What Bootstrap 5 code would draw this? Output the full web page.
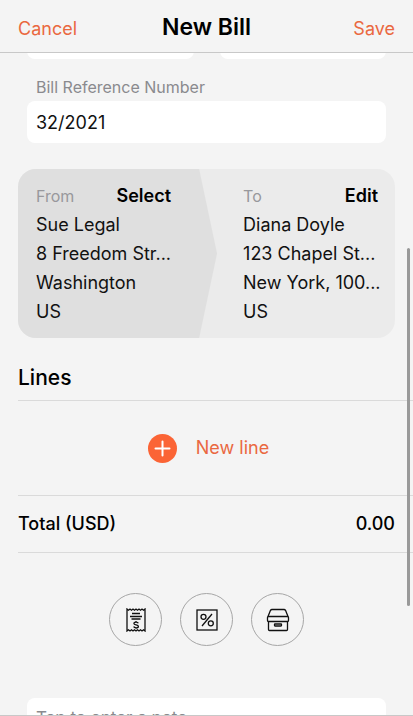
<!DOCTYPE html>
<html lang="en">
<head>
<meta charset="utf-8">
<meta name="viewport" content="width=device-width, initial-scale=1">
<title>New Bill</title>
<link rel="stylesheet" href="https://cdn.jsdelivr.net/npm/bootstrap@5.3.0/dist/css/bootstrap.min.css">
<style>
  :root { --accent: #ea6840; --page: #f4f4f4; --muted: #8a8a8e; }
  body { font-family: Inter, "Liberation Sans", sans-serif; font-size: 18px; line-height: 28px; color: #111; background: var(--page); }
  .app-bar { height: 53px; padding: 2px 18px 0; border-bottom: 1px solid #c8c8c8; }
  .app-bar h1 { font-size: 23px; line-height: 28px; font-weight: 600; color: #000; }
  .plain-btn { padding: 0; border: 0; background: none; color: inherit; line-height: 28px; }
  .accent-text { color: var(--accent); }
  .bar-btn { padding-top: 4px; }
  .scroll-pane { border-bottom: 1px solid #c8c8c8; }
  .scrolled { margin-top: -36px; }
  .fields { padding: 0 27px; }
  .fields-pair { gap: 26px; }
  .field { height: 42px; padding: 0 9px; border: 0; border-radius: 8px; background: #fff; color: #111; font-size: 18px; }
  .field::placeholder { color: var(--muted); }
  .field-label { padding: 0 9px; margin-top: 14px; font-size: 16px; color: var(--muted); }
  .parties { margin: 26px 18px 0; border-radius: 18px; background: #ebebeb; }
  .party-from { flex: 0 0 52.5%; padding: 13px 46px 12px 18px; background: #dfdfdf; clip-path: polygon(0 0, 91% 0, 100% 50%, 91% 100%, 0 100%); }
  .party-to { flex: 1 1 0; min-width: 0; padding: 13px 17px 12px 26px; }
  .party-head { height: 28px; }
  .party-head h2 { font-size: 16px; line-height: 28px; font-weight: 400; color: #98989c; }
  .party-btn { font-weight: 600; color: #000; }
  .party address { line-height: 29px; white-space: nowrap; }
  .lines-title { margin: 26px 18px 0; font-size: 21px; line-height: 28px; padding-bottom: 8px; font-weight: 500; color: #000; }
  .ruled { margin-left: 18px; border-top: 1px solid #dadada; }
  .new-line { height: 95px; padding-right: 14px; }
  .new-line button { gap: 19px; }
  .total-row { height: 58px; padding-right: 18px; border-bottom: 1px solid #dadada; font-weight: 500; color: #000; }
  .tools { margin-top: 40px; gap: 18px; }
  .tool-btn { width: 53px; height: 53px; border: 1px solid #a6a6a6; background: none; }
  .note { height: 40px; margin-top: 52px; font-size: 17px; }
  .scroll-thumb { top: 248px; right: 3px; width: 3px; height: 358px; background: #999; border-radius: 2px; }
</style>
<script src="https://cdn.jsdelivr.net/npm/bootstrap@5.3.0/dist/js/bootstrap.bundle.min.js"></script>
</head>
<body>
<div class="vh-100 d-flex flex-column overflow-hidden position-relative">
  <header class="app-bar row g-0 align-items-center flex-shrink-0">
    <div class="col"><button type="button" class="plain-btn bar-btn accent-text">Cancel</button></div>
    <h1 class="col-auto mb-0">New Bill</h1>
    <div class="col text-end"><button type="button" class="plain-btn bar-btn accent-text">Save</button></div>
  </header>

  <main class="scroll-pane flex-grow-1 overflow-hidden">
    <form class="scrolled">
      <div class="fields">
        <div class="fields-pair d-flex">
          <input class="field w-100" type="text" aria-label="Issue date">
          <input class="field w-100" type="text" aria-label="Due date">
        </div>
        <label class="field-label d-block" for="reference">Bill Reference Number</label>
        <input class="field w-100 d-block" id="reference" type="text" value="32/2021">
      </div>

      <section class="parties party d-flex overflow-hidden">
        <div class="party-from">
          <div class="party-head d-flex justify-content-between">
            <h2 class="mb-0">From</h2>
            <button type="button" class="plain-btn party-btn">Select</button>
          </div>
          <address class="mb-0">Sue Legal<br>8 Freedom Str...<br>Washington<br>US</address>
        </div>
        <div class="party-to">
          <div class="party-head d-flex justify-content-between">
            <h2 class="mb-0">To</h2>
            <button type="button" class="plain-btn party-btn">Edit</button>
          </div>
          <address class="mb-0">Diana Doyle<br>123 Chapel St...<br>New York, 100...<br>US</address>
        </div>
      </section>

      <h2 class="lines-title mb-0">Lines</h2>
      <div class="ruled new-line d-flex justify-content-center align-items-center">
        <button type="button" class="plain-btn accent-text d-flex align-items-center">
          <svg width="29" height="29" viewBox="0 0 29 29" aria-hidden="true">
            <circle cx="14.5" cy="14.5" r="14.5" fill="#fb6435"/>
            <path d="M14.5 7.5v14M7.5 14.5h14" stroke="#fff" stroke-width="2" stroke-linecap="round"/>
          </svg>
          <span>New line</span>
        </button>
      </div>
      <div class="ruled total-row d-flex justify-content-between align-items-center">
        <span>Total (USD)</span><span>0.00</span>
      </div>

      <div class="tools d-flex justify-content-center">
        <button type="button" class="tool-btn rounded-circle d-flex align-items-center justify-content-center p-0" aria-label="Receipt">
          <svg width="22" height="24" viewBox="0 0 22 24" fill="none" stroke="#111" stroke-width="1.3" aria-hidden="true">
            <path d="M2 1l1.5 1.2L5 1l1.5 1.2L8 1l1.5 1.2L11 1l1.5 1.2L14 1l1.5 1.2L17 1l1.5 1.2L20 1v22l-1.5-1.2L17 23l-1.5-1.2L14 23l-1.5-1.2L11 23l-1.5-1.2L8 23l-1.5-1.2L5 23l-1.5-1.2L2 23z"/>
            <path d="M7 5.5h8M5 8.500h12M6.5 11h9M13.3 15.300c-.3-.8-1.1-1.2-2.2-1.2-1.3 0-2.2.6-2.2 1.4 0 1.9 4.5 1 4.5 2.9 0 1-1 1.4-2.3 1.4s-2.2-.5-2.400-1.300M11 13v1M11 19.800v1"/>
          </svg>
        </button>
        <button type="button" class="tool-btn rounded-circle d-flex align-items-center justify-content-center p-0" aria-label="Discount">
          <svg width="22" height="22" viewBox="0 0 22 22" fill="none" stroke="#111" stroke-width="1.3" aria-hidden="true">
            <rect x="1" y="1" width="20" height="20"/>
            <path d="M16 5L6 17"/><circle cx="7.5" cy="7.8" r="2.5"/><circle cx="14.8" cy="14.3" r="2.5"/>
          </svg>
        </button>
        <button type="button" class="tool-btn rounded-circle d-flex align-items-center justify-content-center p-0" aria-label="Catalogue">
          <svg width="24" height="24" viewBox="0 0 24 24" fill="none" stroke="#111" stroke-width="1.3" stroke-linejoin="round" aria-hidden="true">
            <path d="M2 8.5L4.5 2.3Q5 1.5 6 1.5h12Q19 1.5 19.5 2.3L22 8.5"/>
            <rect x="1.5" y="8.5" width="21" height="5" rx="1"/>
            <path d="M2.5 13.5V21.5Q2.5 22.5 3.5 22.5H20.5Q21.5 22.5 21.5 21.5V13.5"/>
            <rect x="8.5" y="16" width="7" height="2" rx=".5"/>
          </svg>
        </button>
      </div>

      <div class="fields">
        <input class="field note w-100 d-block" type="text" placeholder="Tap to enter a note" aria-label="Note">
      </div>
    </form>
  </main>
  <div class="scroll-thumb position-absolute" aria-hidden="true"></div>
</div>
</body>
</html>
